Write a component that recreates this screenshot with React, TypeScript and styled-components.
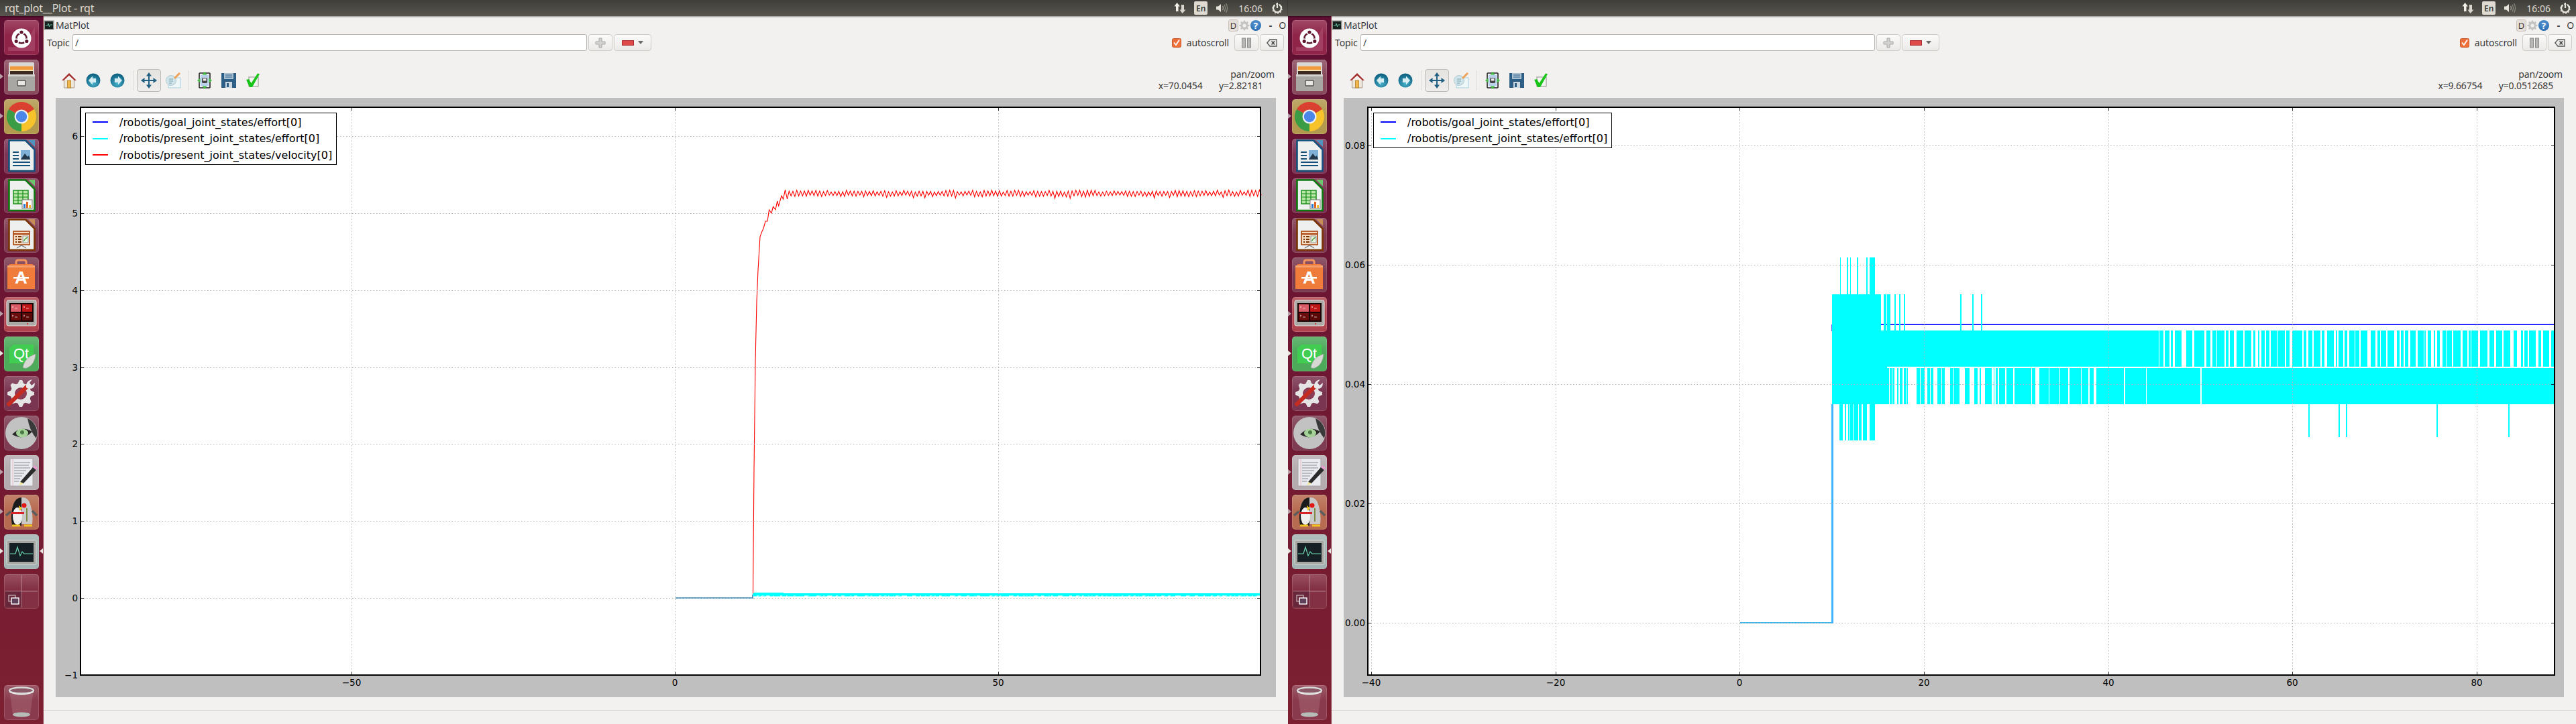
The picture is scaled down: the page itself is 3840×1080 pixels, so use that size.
import React from "react";
import styled, { createGlobalStyle } from "styled-components";

const GlobalStyle = createGlobalStyle`
  html, body {
    margin: 0;
    width: 3840px;
    height: 1080px;
    overflow: hidden;
    background: #f2f1f0;
    font-family: "Noto Sans", "Open Sans", sans-serif;
    color: #3c3c3c;
  }
`;

const Desktop = styled.div`
  display: grid;
  grid-template-columns: 1920px 1920px;
  height: 1080px;
`;

const Screen = styled.div`
  display: flex;
  flex-direction: column;
  height: 1080px;
  min-width: 0;
`;

/* ---------- top panel ---------- */

const TopBar = styled.div`
  height: 24px;
  flex: none;
  display: flex;
  align-items: center;
  padding: 0 8px 0 7px;
  background: linear-gradient(#3f3e3a, #57554d);
  box-shadow: 0 1px 2px rgba(0, 0, 0, 0.45);
  position: relative;
  z-index: 2;
`;

const WindowTitle = styled.div`
  color: #dfdbd2;
  font-size: 16px;
  letter-spacing: -0.2px;
  white-space: nowrap;
`;

const Tray = styled.div`
  margin-left: auto;
  display: flex;
  align-items: center;
  gap: 12px;
`;

const LangPill = styled.div`
  width: 20px;
  height: 20px;
  background: #dfdbd2;
  color: #3c3b37;
  border-radius: 2px;
  font-size: 12px;
  font-weight: 600;
  display: flex;
  align-items: center;
  justify-content: center;
`;

const Clock = styled.div`
  color: #dfdbd2;
  font-size: 14px;
  margin: 0 2px;
`;

const TrayArrows = () => (
  <svg width="18" height="18" viewBox="0 0 18 18">
    <path d="M4.5 1 L9 6.5 H6.5 V14 H3 V6.5 H0.5 Z" fill="#f2efe8" />
    <path d="M12.5 17 L17.5 11.5 H15 V4 H11 V11.5 H8.5 Z" fill="#d8d5cc" />
  </svg>
);

const TraySpeaker = () => (
  <svg width="20" height="18" viewBox="0 0 20 18" fill="none">
    <path d="M1 6.5 H4 L8 3 V15 L4 11.5 H1 Z" fill="#e6e3da" />
    <path d="M10.5 6 Q12.5 9 10.5 12" stroke="#9c9a92" strokeWidth="1.4" />
    <path d="M13 4 Q16 9 13 14" stroke="#85837b" strokeWidth="1.4" />
    <path d="M15.5 2 Q19.5 9 15.5 16" stroke="#85837b" strokeWidth="1.4" />
  </svg>
);

const TrayPower = () => (
  <svg width="16" height="18" viewBox="0 0 16 18" fill="none" stroke="#e6e3da">
    <path d="M8 1 V9" strokeWidth="2.2" />
    <path d="M4.5 4.5 A6 6 0 1 0 11.5 4.5" strokeWidth="2.4" />
    <circle cx="8" cy="10" r="7" strokeWidth="1.4" strokeDasharray="2 2.4" />
  </svg>
);

/* ---------- launcher ---------- */

const Body = styled.div`
  flex: 1;
  min-height: 0;
  display: flex;
`;

const Launcher = styled.div`
  width: 65px;
  flex: none;
  box-sizing: border-box;
  display: flex;
  flex-direction: column;
  align-items: center;
  gap: 7px;
  padding: 6px 0;
  background: linear-gradient(#5f0f32, #6e1733 45%, #7c2031);
  border-right: 1px solid #8f3f48;
`;

const Tile = styled.div<{ $bg: string; $pip?: "open" | "solid" | "both"; $end?: boolean }>`
  width: 52px;
  height: 52px;
  flex: none;
  position: relative;
  border-radius: 5px;
  margin-top: ${({ $end }) => ($end ? "auto" : "0")};
  background: linear-gradient(rgba(255, 255, 255, 0.16), rgba(255, 255, 255, 0) 45%), ${({ $bg }) => $bg};
  box-shadow: inset 0 0 0 1px rgba(255, 255, 255, 0.14);
  svg {
    display: block;
  }
  &::before {
    content: ${({ $pip }) => ($pip ? '""' : "none")};
    position: absolute;
    left: -6px;
    top: 21px;
    width: 0;
    height: 0;
    border-left: 5px solid ${({ $pip }) => ($pip === "open" ? "#b9a0a8" : "#e8e4e0")};
    border-top: 4px solid transparent;
    border-bottom: 4px solid transparent;
  }
  &::after {
    content: ${({ $pip }) => ($pip === "both" ? '""' : "none")};
    position: absolute;
    right: -6px;
    top: 21px;
    width: 0;
    height: 0;
    border-right: 5px solid #e8e4e0;
    border-top: 4px solid transparent;
    border-bottom: 4px solid transparent;
  }
`;

const Glyph: React.FC<{ children: React.ReactNode }> = ({ children }) => (
  <svg width="52" height="52" viewBox="0 0 52 52">
    {children}
  </svg>
);

const gearPath = (cx: number, cy: number, r1: number, r2: number, teeth: number) => {
  let d = "";
  const n = teeth * 4;
  for (let i = 0; i < n; i++) {
    const a = ((i - 0.5) / n) * Math.PI * 2;
    const r = i % 4 < 2 ? r2 : r1;
    d += `${i ? "L" : "M"}${(cx + Math.cos(a) * r).toFixed(1)} ${(cy + Math.sin(a) * r).toFixed(1)}`;
  }
  return d + "Z";
};

const DashIcon = () => (
  <Glyph>
    <path d="M6 40 Q30 44 46 10 L46 46 H6 Z" fill="#b4587a" opacity="0.5" />
    <circle cx="26" cy="27" r="14.5" fill="#fff" />
    <circle cx="26" cy="27" r="7.5" fill="none" stroke="#5e1730" strokeWidth="2.6" />
    <circle cx="26" cy="18" r="4" fill="#fff" />
    <circle cx="18.2" cy="31.5" r="4" fill="#fff" />
    <circle cx="33.8" cy="31.5" r="4" fill="#fff" />
    <circle cx="26" cy="18" r="2.6" fill="#5e1730" />
    <circle cx="18.2" cy="31.5" r="2.6" fill="#5e1730" />
    <circle cx="33.8" cy="31.5" r="2.6" fill="#5e1730" />
  </Glyph>
);

const FilesIcon = () => (
  <Glyph>
    <rect x="7" y="4" width="38" height="20" rx="1.5" fill="#d9d7d4" />
    <rect x="9" y="10" width="34" height="6" fill="#f09a3e" />
    <rect x="9" y="15" width="34" height="2" fill="#fbe3b0" />
    <rect x="9" y="17" width="34" height="6" fill="#3a2a22" />
    <rect x="6" y="22" width="40" height="25" rx="1.5" fill="#a9a7a4" />
    <rect x="6" y="22" width="40" height="3" fill="#d6d4d1" />
    <rect x="20" y="31" width="12" height="8" rx="1" fill="#e9e7e4" stroke="#55534f" strokeWidth="1.4" />
  </Glyph>
);

const ChromeIcon = () => (
  <Glyph>
    <path d="M26 26 L6.95 15 A22 22 0 0 1 45.05 15 Z" fill="#d9402f" />
    <path d="M26 26 L45.05 15 A22 22 0 0 1 26 48 Z" fill="#f6c42a" />
    <path d="M26 26 L26 48 A22 22 0 0 1 6.95 15 Z" fill="#3b9c46" />
    <circle cx="26" cy="26" r="10.5" fill="#eef0f4" />
    <circle cx="26" cy="26" r="8.2" fill="#4c86e8" />
  </Glyph>
);

const DocSheet: React.FC<{ edge: string; corner: string; children?: React.ReactNode }> = ({ edge, corner, children }) => (
  <Glyph>
    <path d="M7.5 2.5 H32 L45.5 16 V48 H7.5 Z" fill="#eef0ef" stroke={edge} strokeWidth="2.6" />
    <path d="M36 2 H46 V12 Z" fill={corner} />
    {children}
  </Glyph>
);

const WriterIcon = () => (
  <DocSheet edge="#14527e" corner="#4f93c2">
    <path d="M13 20 H22 M13 25 H22 M13 30 H22 M13 35 H39 M13 40 H39" stroke="#14527e" strokeWidth="2.2" />
    <rect x="25" y="17" width="14" height="14" fill="#7fb0d6" />
    <path d="M25 31 L31 22 L35 27 L37 25 L39 31 Z" fill="#23384a" />
  </DocSheet>
);

const CalcIcon = () => (
  <DocSheet edge="#0d7a10" corner="#6dc56c">
    <rect x="14" y="18" width="22" height="20" fill="#b5e6a6" stroke="#138a13" strokeWidth="1.4" />
    <path d="M14 23 H36 M14 28 H36 M14 33 H36 M21 18 V38 M28 18 V38" stroke="#138a13" strokeWidth="1.2" />
    <rect x="27" y="32" width="15" height="13" fill="#fff" stroke="#777" />
    <rect x="29" y="38" width="3" height="6" fill="#2b7fd0" />
    <rect x="33" y="35" width="3" height="9" fill="#e2682a" />
    <rect x="37" y="40" width="3" height="4" fill="#f0c030" />
  </DocSheet>
);

const ImpressIcon = () => (
  <DocSheet edge="#7a3400" corner="#c98d5a">
    <rect x="14" y="20" width="24" height="20" fill="#f7dcc4" stroke="#a8440c" strokeWidth="1.6" />
    <path d="M14 24 H38" stroke="#a8440c" strokeWidth="2" />
    <path d="M17 28 H19 M17 32 H19 M17 36 H19 M21 28 H26 M21 32 H26 M21 36 H26" stroke="#7a3400" strokeWidth="2" />
    <rect x="28" y="27" width="8" height="10" fill="#e4f0d8" stroke="#668" strokeWidth="0.6" />
    <path d="M29 35 L32 31 L35 29" stroke="#3a9030" strokeWidth="1.2" fill="none" />
    <path d="M19 45 L26 41 L33 45" stroke="#777" strokeWidth="1.4" fill="none" />
  </DocSheet>
);

const BagText = styled.text`
  font-family: "Liberation Sans", sans-serif;
  font-weight: 700;
  font-size: 26px;
  fill: #fff;
`;

const SoftwareIcon = () => (
  <Glyph>
    <path d="M18 12 V7 Q18 4 21 4 H30 Q33 4 33 7 V12" fill="none" stroke="#f19260" strokeWidth="3" />
    <path d="M5 13 L9 10 H42 L46 13 V47 H5 Z" fill="#ef7c3a" />
    <rect x="5" y="12" width="41" height="3" fill="#f3a070" />
    <BagText x="25.5" y="39" textAnchor="middle">A</BagText>
    <rect x="14" y="29" width="23" height="2.6" fill="#fff" />
  </Glyph>
);

const TerminalIcon = () => (
  <Glyph>
    <rect x="4" y="5" width="44" height="38" rx="3" fill="#aaa9a6" stroke="#ddd" strokeWidth="1.2" />
    <rect x="8" y="9" width="36" height="28" fill="#1a0505" />
    <rect x="10" y="11" width="15" height="11" fill="#d95c66" />
    <rect x="27" y="11" width="15" height="11" fill="#c01818" />
    <rect x="10" y="24" width="15" height="11" fill="#6a0d0d" />
    <rect x="27" y="24" width="15" height="11" fill="#5a0808" />
    <path d="M12 14 L14 15 L12 16 M16 17 H20 M29 14 L31 15 L29 16 M33 17 H37 M12 27 L14 28 L12 29 M16 30 H20 M29 27 L31 28 L29 29 M33 30 H37" stroke="#f3d8d8" strokeWidth="0.8" fill="none" />
    <circle cx="35" cy="40" r="1" fill="#e02020" />
  </Glyph>
);

const QtText = styled.text`
  font-family: "Liberation Sans", sans-serif;
  font-size: 22px;
  fill: #fff;
`;

const QtIcon = () => (
  <Glyph>
    <path d="M14 12 H44 V31 L37 40 H8 V18 Z" fill="#41cd52" />
    <QtText x="14" y="33">Qt</QtText>
    <path d="M28 46 Q31 31 47 26 Q46 42 34 47 Q30 48 28 46 Z" fill="#d6d8d4" stroke="#9a9c98" strokeWidth="0.6" />
  </Glyph>
);

const SettingsIcon = () => (
  <Glyph>
    <path d={gearPath(25, 26, 15.5, 20, 8)} fill="#e4e4e4" />
    <circle cx="25" cy="26" r="9" fill="#8d3c55" />
    <path d="M7 42 L36 14" stroke="#c42c22" strokeWidth="6" strokeLinecap="round" />
    <path d="M33 17 Q32 7 42 5 L38 10 L41 14 L46 10 Q46 20 36 19 Z" fill="#e8e8e8" />
  </Glyph>
);

const EyeIcon = () => (
  <Glyph>
    <circle cx="26" cy="26" r="24" fill="#c2c2c2" />
    <path d="M35 4 A24 24 0 0 1 48 34 Q38 22 35 4 Z" fill="#3a3a3a" />
    <path d="M12 28 Q26 14 42 24 Q28 38 12 28 Z" fill="#2a2a2a" />
    <ellipse cx="27" cy="26" rx="9" ry="6.5" fill="#a6d29a" />
    <circle cx="27" cy="25" r="3" fill="#4d7d46" />
  </Glyph>
);

const GeditIcon = () => (
  <Glyph>
    <rect x="9" y="5" width="34" height="41" fill="#e8eaf0" stroke="#a8a4a6" />
    <path d="M13 5 V46" stroke="#e8a8b0" strokeWidth="0.8" />
    <path d="M15 11 H39 M15 15 H37 M15 19 H39 M15 23 H33 M15 27 H30 M15 31 H27 M15 35 H24 M15 39 H22" stroke="#8d8d92" strokeWidth="1" />
    <path d="M24 40 L43 18 L48 22 L29 42 Z" fill="#2b2b2b" />
    <path d="M24 40 L29 42 L23 45 Z" fill="#f2e58a" />
    <path d="M43 18 L45 15 L50 19 L48 22 Z" fill="#e79ad0" />
  </Glyph>
);

const TuxIcon = () => (
  <Glyph>
    <path d="M14 14 Q18 4 28 4 Q36 4 39 14 Q44 30 42 44 H12 Q9 28 14 14 Z" fill="#c8c8c8" />
    <path d="M14 14 Q18 4 26 4 V46 H12 Q9 28 14 14 Z" fill="#1b1b1b" />
    <ellipse cx="20" cy="32" rx="7" ry="13" fill="#efefef" />
    <circle cx="30" cy="16" r="3.5" fill="#e01818" />
    <path d="M22 16 L27 20 L23 24 Z" fill="#f2c61f" />
    <rect x="10" y="26" width="20" height="3" fill="#d8222a" />
    <path d="M10 25 L3 31 M42 24 L49 31" stroke="#5c5c5c" strokeWidth="3.5" />
    <path d="M12 46 H24 M30 46 H42" stroke="#f2c61f" strokeWidth="3" />
    <path d="M34 20 V40" stroke="#7d8a4a" strokeWidth="2" />
  </Glyph>
);

const MonitorIcon = () => (
  <Glyph>
    <rect x="4" y="9" width="44" height="36" rx="1.5" fill="#a5a5a2" stroke="#d8d8d8" />
    <rect x="8" y="13" width="36" height="28" fill="#162024" />
    <path d="M9 29 H17 L20 19 L24 32 L27 26 L30 29 H43" fill="none" stroke="#6fd6b0" strokeWidth="1.2" />
  </Glyph>
);

const WorkspaceIcon = () => (
  <Glyph>
    <path d="M26 2 V50 M2 26 H50" stroke="#c79aa6" strokeWidth="0.8" />
    <rect x="2" y="26" width="24" height="24" fill="rgba(40,20,40,0.3)" />
    <rect x="7" y="32" width="10" height="9" fill="none" stroke="#c9b8c0" strokeWidth="1.2" />
    <rect x="11" y="36" width="11" height="9" fill="#5e4058" stroke="#fff" strokeWidth="1.4" />
  </Glyph>
);

const TrashIcon = () => (
  <Glyph>
    <path d="M8 8 L13 44 Q26 50 39 44 L44 8 Z" fill="rgba(255,255,255,0.12)" />
    <ellipse cx="26" cy="44" rx="13" ry="3.5" fill="#b8bcb8" />
    <ellipse cx="26" cy="8" rx="18" ry="4.5" fill="#8a5a68" stroke="#d8d8d8" strokeWidth="2.4" />
    <path d="M8 10 Q26 18 44 10" fill="none" stroke="#e8e8e8" strokeWidth="1.6" />
  </Glyph>
);

const launcherItems: {
  id: string;
  bg: string;
  pip?: "open" | "solid" | "both";
  Icon: React.FC;
  end?: boolean;
}[] = [
  { id: "dash", bg: "#8f2448", Icon: DashIcon },
  { id: "files", bg: "#8a4a5e", pip: "open", Icon: FilesIcon },
  { id: "chrome", bg: "#b3994e", pip: "open", Icon: ChromeIcon },
  { id: "writer", bg: "#7d3556", Icon: WriterIcon },
  { id: "calc", bg: "#7a3050", Icon: CalcIcon },
  { id: "impress", bg: "#7f3a50", Icon: ImpressIcon },
  { id: "software", bg: "#7b3a50", Icon: SoftwareIcon },
  { id: "terminal", bg: "#b0444e", pip: "open", Icon: TerminalIcon },
  { id: "qt", bg: "#4caa5a", pip: "solid", Icon: QtIcon },
  { id: "settings", bg: "#7a3550", Icon: SettingsIcon },
  { id: "eye", bg: "#7d3c52", Icon: EyeIcon },
  { id: "gedit", bg: "#b5acb0", pip: "open", Icon: GeditIcon },
  { id: "tux", bg: "#b76b50", pip: "open", Icon: TuxIcon },
  { id: "monitor", bg: "#a3b3b3", pip: "both", Icon: MonitorIcon },
  { id: "workspace", bg: "#843044", Icon: WorkspaceIcon },
  { id: "trash", bg: "#893a4c", Icon: TrashIcon, end: true },
];

/* ---------- rqt plugin chrome ---------- */

const Main = styled.div`
  flex: 1;
  min-width: 0;
  display: flex;
  flex-direction: column;
  background: #f2f1f0;
`;

const DockTitle = styled.div`
  height: 27px;
  flex: none;
  display: flex;
  align-items: center;
  padding-right: 3px;
  font-size: 14px;
  letter-spacing: -0.15px;
`;

const DockName = styled.span`
  margin-left: 2px;
`;

const DockControls = styled.div`
  margin-left: auto;
  display: flex;
  align-items: center;
`;

const DockD = styled.span`
  width: 13px;
  height: 16px;
  border: 1px solid #c9c0b8;
  border-radius: 3px;
  background: #e6ded8;
  font-size: 13px;
  line-height: 16px;
  text-align: center;
  margin-right: 1px;
`;

const DockDash = styled.span`
  margin: 0 10px 0 12px;
  font-weight: 700;
`;

const TopicRow = styled.div`
  height: 25px;
  flex: none;
  display: flex;
  align-items: stretch;
  padding: 0 4px 0 5px;
  font-size: 14px;
  letter-spacing: -0.15px;
`;

const TopicLabel = styled.label`
  width: 38px;
  display: flex;
  align-items: center;
`;

const TopicInput = styled.div`
  width: 767px;
  box-sizing: border-box;
  background: #fff;
  border: 1px solid #b8b5ae;
  border-radius: 3px;
  padding-left: 3px;
  display: flex;
  align-items: center;
  margin-right: 2px;
`;

const PushButton = styled.div<{ $w: number }>`
  width: ${({ $w }) => $w}px;
  box-sizing: border-box;
  margin-right: 2px;
  display: flex;
  align-items: center;
  justify-content: center;
  gap: 6px;
  border: 1px solid #cfcdc8;
  border-radius: 4px;
  background: linear-gradient(#fafafa, #eceae7);
`;

const AutoScroll = styled.div`
  margin-left: auto;
  display: flex;
  align-items: center;
  gap: 8px;
  margin-right: 8px;
`;

const CheckMark = styled.svg`
  display: block;
`;

const Swatch = styled.div`
  width: 16px;
  height: 6px;
  border: 1px solid #a83030;
  background: #e04a4a;
`;

const Caret = styled.div`
  width: 0;
  height: 0;
  border-left: 4px solid transparent;
  border-right: 4px solid transparent;
  border-top: 5px solid #6c6c6c;
`;

const ToolBar = styled.div`
  height: 70px;
  flex: none;
  box-sizing: border-box;
  display: flex;
  align-items: flex-start;
  padding: 27px 20px 0 20px;
`;

const ToolButton = styled.div<{ $checked?: boolean }>`
  width: 36px;
  height: 34px;
  box-sizing: border-box;
  display: flex;
  align-items: center;
  justify-content: center;
  border-radius: 4px;
  border: 1px solid ${({ $checked }) => ($checked ? "#bcbab5" : "transparent")};
  background: ${({ $checked }) => ($checked ? "linear-gradient(#e6e4e1, #eeedeb)" : "transparent")};
`;

const ToolSep = styled.div`
  width: 1px;
  height: 30px;
  margin: 2px 5px 0;
  background: #dcdad6;
`;

const Coords = styled.div`
  margin-left: auto;
  margin-top: -1px;
  text-align: right;
  font-size: 14px;
  letter-spacing: -0.15px;
  line-height: 17px;
  white-space: pre;
`;

const HomeIcon = () => (
  <svg width="24" height="24" viewBox="0 0 24 24">
    <path d="M4.5 11 V23 H19.5 V11" fill="#eee8dc" stroke="#8c7a6a" strokeWidth="0.8" />
    <rect x="9.5" y="12" width="5" height="11" fill="#f0b84a" stroke="#b07a28" strokeWidth="0.8" />
    <path d="M1 12 L12 1 L23 12 L20 12 L12 4.5 L4 12 Z" fill="#a52a2a" />
  </svg>
);

const NavIcon: React.FC<{ flip?: boolean }> = ({ flip }) => (
  <svg width="22" height="22" viewBox="0 0 22 22">
    <defs>
      <radialGradient id="navball" cx="50%" cy="70%" r="65%">
        <stop offset="0" stopColor="#4bb4cc" />
        <stop offset="1" stopColor="#0d5f80" />
      </radialGradient>
    </defs>
    <circle cx="11" cy="11" r="10.5" fill="url(#navball)" />
    <path d={flip ? "M7 8 H12 V4.5 L18 11 L12 17.5 V14 H7 Z" : "M15 8 H10 V4.5 L4 11 L10 17.5 V14 H15 Z"} fill="#d6eef4" />
  </svg>
);

const PanIcon = () => (
  <svg width="24" height="24" viewBox="0 0 24 24" fill="#225f80">
    <path d="M11 5 H13 V11 H19 V13 H13 V19 H11 V13 H5 V11 H11 Z" />
    <path d="M12 0 L16 5.5 H8 Z M12 24 L16 18.5 H8 Z M0 12 L5.5 8 V16 Z M24 12 L18.5 8 V16 Z" />
  </svg>
);

const EditIcon = () => (
  <svg width="24" height="24" viewBox="0 0 24 24" fill="none">
    <rect x="5" y="8" width="18" height="15" fill="#eef6f8" stroke="#a8d2de" />
    <circle cx="9" cy="12" r="7.5" fill="#cfe4ea" stroke="#b4cbd2" />
    <path d="M6 10 H12 M6 13 H12 M6 16 H10" stroke="#7fa6b4" strokeWidth="1.2" />
    <path d="M14 9 L22 1" stroke="#eda25c" strokeWidth="3" />
  </svg>
);

const ConfigIcon = () => (
  <svg width="22" height="26" viewBox="0 0 22 26">
    <rect x="3" y="2" width="16" height="22" rx="1" fill="#eef2f6" stroke="#222" strokeWidth="1.6" />
    <rect x="5" y="5" width="12" height="16" fill="#b8d0e8" />
    <rect x="7" y="9" width="8" height="8" rx="2" fill="#444" />
    <rect x="8.5" y="10" width="5" height="3.5" fill="#e8e8e8" />
    <path d="M11 0 L14.5 4.5 H7.5 Z M11 26 L14.5 21.5 H7.5 Z M0 13 L4.5 9.5 V16.5 Z M22 13 L17.5 9.5 V16.5 Z" fill="#3fb83f" />
  </svg>
);

const SaveIcon = () => (
  <svg width="24" height="24" viewBox="0 0 24 24">
    <path d="M1 1 H23 V23 H1 Z" fill="#2d5f86" />
    <rect x="5" y="1" width="14" height="9" fill="#a9c0d2" />
    <path d="M7 4 H17 M7 7 H17" stroke="#2d5f86" />
    <rect x="7" y="14" width="10" height="9" fill="#cdd9e2" />
    <rect x="9" y="16" width="3" height="6" fill="#2d5f86" />
  </svg>
);

const ApplyIcon = () => (
  <svg width="22" height="22" viewBox="0 0 22 22">
    <rect x="5" y="6" width="14" height="14" fill="#f4f4f2" stroke="#9e9e9a" strokeWidth="1.2" />
    <path d="M1 10 L5 9 L8.5 15 L18 0.5 L21 1.5 L10 21 L6 21 Z" fill="#19c419" />
  </svg>
);

const DockGear = () => (
  <svg width="16" height="18" viewBox="0 0 16 18">
    <path d={gearPath(8, 9, 5.6, 7.6, 8)} fill="#c4c4c2" />
    <circle cx="8" cy="9" r="2.6" fill="#f2f1f0" />
  </svg>
);

const DockHelp = styled.span`
  width: 16px;
  height: 16px;
  margin-left: 1px;
  border-radius: 50%;
  background: radial-gradient(circle at 50% 35%, #5c9bd8, #1f5fa6);
  color: #fff;
  font-size: 13px;
  font-weight: 700;
  line-height: 16px;
  text-align: center;
`;

const PlotIcon = () => (
  <svg width="16" height="15" viewBox="0 0 16 15">
    <rect x="0.5" y="0.5" width="15" height="14" fill="#8e8e8c" />
    <rect x="2" y="2" width="12" height="11" fill="#16201f" />
    <path d="M3 8 H6 L7 5 L8.5 10 L9.5 7 H13" stroke="#7fe0bb" fill="none" strokeWidth="0.8" />
  </svg>
);

/* ---------- matplotlib canvas ---------- */

const Canvas = styled.div`
  height: 894px;
  flex: none;
  margin: 0 18px;
  position: relative;
  background: #bfbfbf;
  svg {
    display: block;
  }
`;

const Footer = styled.div`
  flex: 1;
  margin-top: 19px;
  border-top: 1px solid #d5d3cf;
`;

const TickLabel = styled.text`
  font-family: "DejaVu Sans", sans-serif;
  font-size: 13.5px;
  fill: #000;
`;

const Legend = styled.div`
  position: absolute;
  left: 44px;
  top: 22px;
  box-sizing: border-box;
  padding: 1px 6px 1px 10px;
  background: #fff;
  border: 1.5px solid #000;
  font-family: "DejaVu Sans", sans-serif;
  font-size: 16px;
  color: #000;
`;

const LegendRow = styled.div`
  height: 24.5px;
  display: flex;
  align-items: center;
  gap: 17px;
  white-space: nowrap;
`;

const LegendLine = styled.span<{ $color: string }>`
  width: 23px;
  height: 2px;
  background: ${({ $color }) => $color};
`;

type Box = { x0: number; x1: number; y0: number; y1: number };
type Tick = { at: number; label: string };

const mulberry = (seed: number) => () => {
  seed = (seed + 0x6d2b79f5) | 0;
  let t = Math.imul(seed ^ (seed >>> 15), 1 | seed);
  t = (t + Math.imul(t ^ (t >>> 7), 61 | t)) ^ t;
  return ((t ^ (t >>> 14)) >>> 0) / 4294967296;
};

const PlotFrame: React.FC<{
  originX: number;
  box: Box;
  xTicks: Tick[];
  yTicks: Tick[];
  children: React.ReactNode;
}> = ({ originX, box, xTicks, yTicks, children }) => (
  <svg width="1819" height="894" viewBox={`${originX} 146 1819 894`}>
    <rect x={box.x0} y={box.y0} width={box.x1 - box.x0} height={box.y1 - box.y0} fill="#fff" />
    {children}
    {xTicks.map((t) => (
      <path key={t.label} d={`M${t.at + 0.5} ${box.y0} V${box.y1}`} stroke="#b4b4b4" strokeDasharray="1.5 3" />
    ))}
    {yTicks.map((t) => (
      <path key={t.label} d={`M${box.x0} ${t.at + 0.5} H${box.x1}`} stroke="#b4b4b4" strokeDasharray="1.5 3" />
    ))}
    {xTicks.map((t) => (
      <path
        key={t.label}
        d={`M${t.at + 0.5} ${box.y0} v5 M${t.at + 0.5} ${box.y1} v-5`}
        stroke="#000"
        strokeWidth="0.8"
      />
    ))}
    {yTicks.map((t) => (
      <path
        key={t.label}
        d={`M${box.x0} ${t.at + 0.5} h5 M${box.x1} ${t.at + 0.5} h-5`}
        stroke="#000"
        strokeWidth="0.8"
      />
    ))}
    <rect
      x={box.x0}
      y={box.y0}
      width={box.x1 - box.x0}
      height={box.y1 - box.y0}
      fill="none"
      stroke="#000"
      strokeWidth="2"
    />
    {xTicks.map((t) => (
      <TickLabel key={t.label} x={t.at} y={box.y1 + 16} textAnchor="middle">
        {t.label}
      </TickLabel>
    ))}
    {yTicks.map((t) => (
      <TickLabel key={t.label} x={box.x0 - 4} y={t.at + 5} textAnchor="end">
        {t.label}
      </TickLabel>
    ))}
  </svg>
);

/* left plot: velocity step response */
const velocityPath = (() => {
  const rand = mulberry(11);
  const rise: [number, number][] = [
    [1122.5, 887], [1124, 700], [1126, 540], [1128, 450], [1130, 403], [1133, 353], [1136, 345], [1138, 341], [1141, 330],
    [1144, 330], [1146.5, 313], [1150, 318], [1152.5, 308], [1156, 313], [1158.7, 300], [1160.7, 307],
    [1165, 292], [1167.5, 297], [1170.5, 283], [1173.5, 297],
  ];
  const pts = rise.map(([x, y]) => `${x} ${y}`);
  let x = 1173.5;
  let up = true;
  while (x < 1879) {
    x += 2.85;
    const y = up ? 283.5 + rand() * 3 : 291 + rand() * 2.5 + (rand() > 0.85 ? 2.5 : 0);
    pts.push(`${x.toFixed(1)} ${y.toFixed(1)}`);
    up = !up;
  }
  return "M" + pts.join("L");
})();

const effortNoise = (() => {
  const rand = mulberry(5);
  let d = "";
  for (let x = 1124; x < 1878; x += 2 + rand() * 9) {
    d += `M${x.toFixed(0)} 888h${(1 + rand() * 5).toFixed(0)}v1.5h-6z`;
  }
  return d + "M1124 884h44v2h-44z";
})();

const VelocityData = () => (
  <>
    <path d={velocityPath} fill="none" stroke="#ff0000" strokeWidth="1.1" />
    <path d="M1007 891h115v2h-115z M1121 887h2v6h-2z" fill="#5b9bbd" />
    <path d="M1122 885h757v3.5h-757z" fill="#00ffff" />
    <path d={effortNoise} fill="#00ffff" />
  </>
);

/* right plot: effort samples, pixel runs read off the picture */
const px6 = (x: number) => 2650 + x / 3;
const px10 = (x: number) => 3000 + x / 1.867;
const bar = (x0: number, x1: number, y0: number, y1: number) =>
  `M${x0.toFixed(1)} ${y0}H${x1.toFixed(1)}V${y1}H${x0.toFixed(1)}Z`;

const lowerRuns: [number, number][] = [
  ...[
    [490, 497], [500, 510], [514, 523], [534, 540], [546, 556], [558, 562], [565, 572], [575, 582], [620, 636],
    [640, 656], [670, 682], [684, 695], [715, 732], [735, 748], [770, 785], [790, 812], [838, 848], [850, 858],
    [880, 895], [903, 910], [928, 958], [965, 970], [975, 985], [990, 1018], [1023, 1052], [1058, 1133],
    [1137, 1152],
  ].map(([a, b]) => [px6(a), px6(b)] as [number, number]),
  ...[
    [75, 100], [103, 130], [133, 155], [158, 190], [193, 210], [215, 225], [233, 310], [314, 371], [374, 522],
    [526, 1508],
  ].map(([a, b]) => [px10(a), px10(b)] as [number, number]),
];

const effortBars = (() => {
  const rand = mulberry(29);
  let d = "";
  // solid start of the band
  d += bar(2731, 2803, 439, 603);
  d += bar(2803, 2813, 493, 603);
  // upper half of the main band breaks up towards the right
  d += bar(2803, 3213, 493, 547);
  let x = 3213;
  while (x < 3808) {
    const on = 2 + rand() * (x < 3420 ? 14 : 9);
    d += bar(x, Math.min(x + on, 3808), 493, 547);
    x += on + 1 + rand() * (rand() > 0.88 ? 8 : 3);
  }
  lowerRuns.forEach(([a, b]) => {
    d += bar(a, b, 549, 603);
  });
  // tall spikes above the start
  [[278, 282], [310, 315], [323, 327], [354, 360], [396, 402], [411, 435]].forEach(([a, b]) => {
    d += bar(px6(a), px6(b), 384, 439);
  });
  // spikes below the start
  [[277, 291], [300, 306], [315, 321], [324, 336], [339, 360], [363, 375], [381, 399], [411, 435]].forEach(
    ([a, b]) => {
      d += bar(px6(a), px6(b), 603, 657);
    },
  );
  // spikes between the band and 0.055
  [[460, 462], [473, 486], [490, 505], [522, 527], [543, 548], [564, 569], [816, 822], [870, 875], [909, 915]].forEach(
    ([a, b]) => {
      d += bar(px6(a), px6(b), 439, 493);
    },
  );
  // isolated low samples
  [[823, 827], [907, 911], [928, 931], [1180, 1184], [1379, 1384]].forEach(([a, b]) => {
    d += bar(px10(a), px10(b), 603, 652);
  });
  return d;
})();

const EffortData = () => (
  <g shapeRendering="crispEdges">
    <path d="M2594 928h137v2h-137z" fill="#41b6e6" />
    <path d="M2730 603h2.5v327h-2.5z" fill="#3cb4ff" />
    <path d="M2731 483h1077v2h-1077z" fill="#2a2aff" />
    <path d="M2730 484h2v10h-2z" fill="#5a5aff" />
    <path d={effortBars} fill="#00ffff" />
  </g>
);

const leftTicks = {
  x: [
    { at: 524, label: "\u221250" },
    { at: 1006, label: "0" },
    { at: 1488, label: "50" },
  ],
  y: [
    { at: 1007, label: "\u22121" },
    { at: 892, label: "0" },
    { at: 777, label: "1" },
    { at: 662, label: "2" },
    { at: 548, label: "3" },
    { at: 433, label: "4" },
    { at: 318, label: "5" },
    { at: 203, label: "6" },
  ],
};

const rightTicks = {
  x: [
    { at: 2044, label: "\u221240" },
    { at: 2319, label: "\u221220" },
    { at: 2593, label: "0" },
    { at: 2868, label: "20" },
    { at: 3143, label: "40" },
    { at: 3417, label: "60" },
    { at: 3692, label: "80" },
  ],
  y: [
    { at: 929, label: "0.00" },
    { at: 751, label: "0.02" },
    { at: 573, label: "0.04" },
    { at: 395, label: "0.06" },
    { at: 217, label: "0.08" },
  ],
};

const series = {
  goal: { color: "#0000ff", name: "/robotis/goal_joint_states/effort[0]" },
  effort: { color: "#00ffff", name: "/robotis/present_joint_states/effort[0]" },
  velocity: { color: "#ff0000", name: "/robotis/present_joint_states/velocity[0]" },
};

const PlotPanel: React.FC<{
  coords: string;
  legend: { color: string; name: string }[];
  children: React.ReactNode;
}> = ({ coords, legend, children }) => (
  <Main>
    <DockTitle>
      <PlotIcon />
      <DockName>MatPlot</DockName>
      <DockControls>
        <DockD>D</DockD>
        <DockGear />
        <DockHelp>?</DockHelp>
        <DockDash>-</DockDash>
        <span>O</span>
      </DockControls>
    </DockTitle>
    <TopicRow>
      <TopicLabel>Topic</TopicLabel>
      <TopicInput>/</TopicInput>
      <PushButton $w={36}>
        <svg width="16" height="16" viewBox="0 0 16 16">
          <path d="M6 1 H10 V6 H15 V10 H10 V15 H6 V10 H1 V6 H6 Z" fill="#d2d2d0" stroke="#a8a8a6" />
        </svg>
      </PushButton>
      <PushButton $w={56}>
        <Swatch />
        <Caret />
      </PushButton>
      <AutoScroll>
        <CheckMark width="14" height="14" viewBox="0 0 14 14">
          <rect x="0.5" y="0.5" width="13" height="13" rx="2" fill="#ee6f3a" stroke="#c65a2c" />
          <path d="M3 6.5 L6 10 L11 2.5" fill="none" stroke="#fff" strokeWidth="1.8" />
        </CheckMark>
        autoscroll
      </AutoScroll>
      <PushButton $w={36}>
        <svg width="14" height="16" viewBox="0 0 14 16">
          <rect x="0.5" y="1" width="5" height="14" fill="#b8b8b6" stroke="#8a8a88" />
          <rect x="8.5" y="1" width="5" height="14" fill="#b8b8b6" stroke="#8a8a88" />
        </svg>
      </PushButton>
      <PushButton $w={36}>
        <svg width="16" height="12" viewBox="0 0 16 12">
          <path d="M0.8 6 L5 1 H15 V11 H5 Z" fill="#e8e8e6" stroke="#555" strokeWidth="1.3" />
          <path d="M7.5 3.5 L12 8.5 M12 3.5 L7.5 8.5" stroke="#444" strokeWidth="1.6" />
        </svg>
      </PushButton>
    </TopicRow>
    <ToolBar>
      <ToolButton><HomeIcon /></ToolButton>
      <ToolButton><NavIcon /></ToolButton>
      <ToolButton><NavIcon flip /></ToolButton>
      <ToolSep />
      <ToolButton $checked><PanIcon /></ToolButton>
      <ToolButton><EditIcon /></ToolButton>
      <ToolSep />
      <ToolButton><ConfigIcon /></ToolButton>
      <ToolButton><SaveIcon /></ToolButton>
      <ToolButton><ApplyIcon /></ToolButton>
      <Coords>
        pan/zoom
        <br />
        {coords}
      </Coords>
    </ToolBar>
    <Canvas>
      {children}
      <Legend>
        {legend.map((s) => (
          <LegendRow key={s.name}>
            <LegendLine $color={s.color} />
            {s.name}
          </LegendRow>
        ))}
      </Legend>
    </Canvas>
    <Footer />
  </Main>
);

const Desk: React.FC<{ title?: string; children: React.ReactNode }> = ({ title, children }) => (
  <Screen>
    <TopBar>
      {title && <WindowTitle>{title}</WindowTitle>}
      <Tray>
        <TrayArrows />
        <LangPill>En</LangPill>
        <TraySpeaker />
        <Clock>16:06</Clock>
        <TrayPower />
      </Tray>
    </TopBar>
    <Body>
      <Launcher>
        {launcherItems.map(({ id, bg, pip, Icon, end }) => (
          <Tile key={id} $bg={bg} $pip={pip} $end={end}>
            <Icon />
          </Tile>
        ))}
      </Launcher>
      {children}
    </Body>
  </Screen>
);

export default function App() {
  return (
    <Desktop>
      <GlobalStyle />
      <Desk title="rqt_plot__Plot - rqt">
        <PlotPanel coords={"x=70.0454       y=2.82181     "} legend={[series.goal, series.effort, series.velocity]}>
          <PlotFrame originX={83} box={{ x0: 120, x1: 1879, y0: 160, y1: 1007 }} xTicks={leftTicks.x} yTicks={leftTicks.y}>
            <VelocityData />
          </PlotFrame>
        </PlotPanel>
      </Desk>
      <Desk>
        <PlotPanel coords={"x=9.66754       y=0.0512685    "} legend={[series.goal, series.effort]}>
          <PlotFrame originX={2003} box={{ x0: 2039, x1: 3808, y0: 160, y1: 1007 }} xTicks={rightTicks.x} yTicks={rightTicks.y}>
            <EffortData />
          </PlotFrame>
        </PlotPanel>
      </Desk>
    </Desktop>
  );
}
